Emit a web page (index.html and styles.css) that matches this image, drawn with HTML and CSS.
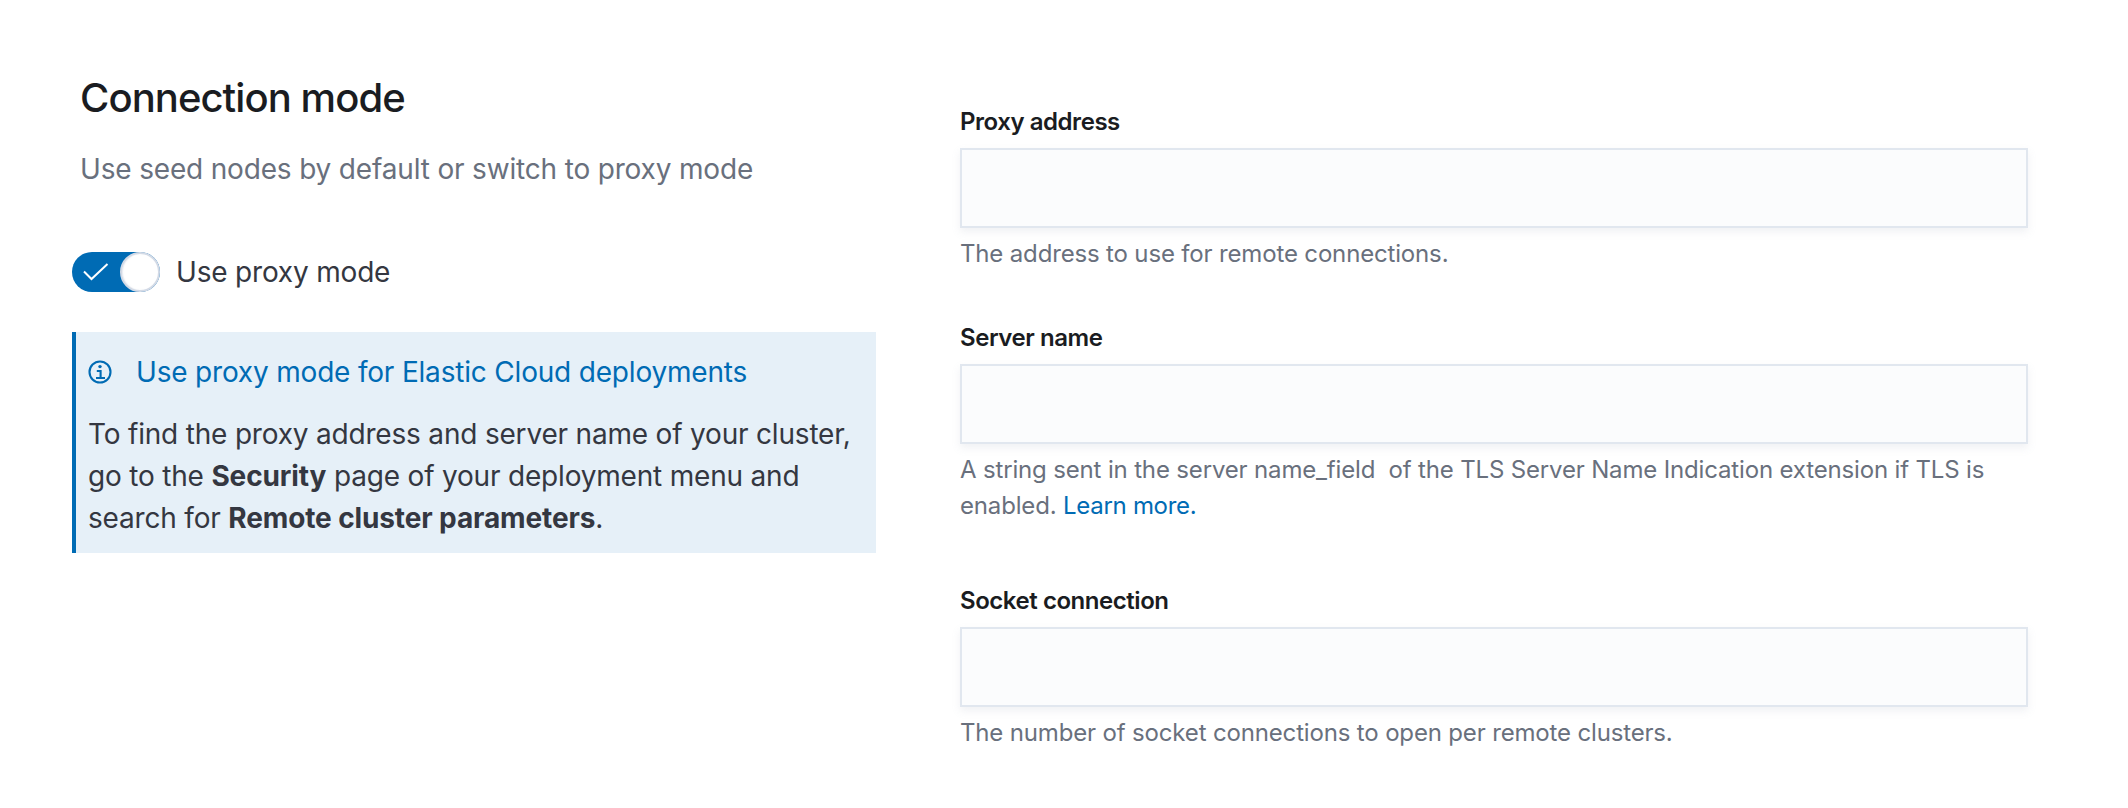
FILE: index.html
```html
<!DOCTYPE html>
<html lang="en">
<head>
<meta charset="utf-8">
<title>Connection mode</title>
<link rel="stylesheet" href="styles.css">
</head>
<body>
<main class="page">
  <section class="left">
    <h2 class="title">Connection mode</h2>
    <p class="subtitle">Use seed nodes by default or switch to proxy mode</p>
    <div class="switch-row">
      <span class="switch">
        <svg class="check" viewBox="0 0 26 20" width="26" height="20" aria-hidden="true"><path d="M1 9.5 L8.5 17 L24.5 2" fill="none" stroke="#fff" stroke-width="2"/></svg>
        <span class="thumb"></span>
      </span>
      <span class="switch-label">Use proxy mode</span>
    </div>
    <div class="callout">
      <div class="callout-title">
        <svg class="info" viewBox="0 0 24 24" width="24" height="24" aria-hidden="true">
          <circle cx="12" cy="12" r="10.5" fill="none" stroke="#006bb4" stroke-width="2.1"/>
          <circle cx="12" cy="6.6" r="1.7" fill="#006bb4"/>
          <path d="M8.8 11 H12.6 V17.6 M8 18 H17" fill="none" stroke="#006bb4" stroke-width="2.1"/>
        </svg>
        <span>Use proxy mode for Elastic Cloud deployments</span>
      </div>
      <p class="callout-body">To find the proxy address and server name of your cluster, go to the <strong>Security</strong> page of your deployment menu and search for <strong>Remote cluster parameters</strong>.</p>
    </div>
  </section>
  <section class="right">
    <div class="field">
      <label class="label">Proxy address</label>
      <div class="input"></div>
      <p class="help">The address to use for remote connections.</p>
    </div>
    <div class="field field-wrapped">
      <label class="label">Server name</label>
      <div class="input"></div>
      <p class="help">A string sent in the server name_field&nbsp; of the TLS Server Name Indication extension if TLS is enabled. <a class="link">Learn more.</a></p>
    </div>
    <div class="field">
      <label class="label">Socket connection</label>
      <div class="input"></div>
      <p class="help">The number of socket connections to open per remote clusters.</p>
    </div>
  </section>
</main>
</body>
</html>
```
FILE: styles.css
```css
* { box-sizing: border-box; }
html, body { margin: 0; padding: 0; background: #fff; }
body { font-family: Inter, "Liberation Sans", sans-serif; color: #343741; width: 2128px; height: 808px; overflow: hidden; }
.page { display: flex; padding: 0 100px 0 72px; gap: 84px; }
.left { width: 804px; flex: none; padding-top: 72px; }
.title { margin: 0 0 0 8px; font-size: 40px; line-height: 52px; font-weight: 450; color: #1a1c21; letter-spacing: -0.93px; }
.subtitle { margin: 25px 0 0 8px; font-size: 28px; line-height: 40px; color: #69707d; letter-spacing: -0.17px; }
.switch-row { display: flex; align-items: center; gap: 16px; margin-top: 63px; }
.switch { position: relative; display: block; width: 88px; height: 40px; border-radius: 20px; background: #006bb4; flex: none; }
.check { position: absolute; left: 11px; top: 10px; }
.thumb { position: absolute; right: 0; top: 0; width: 40px; height: 40px; border-radius: 50%; background: #fff; border: 2px solid #d3dae6; box-shadow: inset 1px 0 1px rgba(211,218,230,.5); }
.switch-label { font-size: 28px; line-height: 40px; letter-spacing: -0.19px; }
.callout { margin-top: 40px; background: #e6f0f8; border-left: 4px solid #006bb4; padding: 20px 8px 14px 12px; }
.callout-title { display: flex; align-items: center; gap: 24px; font-size: 28px; line-height: 40px; color: #006bb4; letter-spacing: -0.19px; }
.info { flex: none; }
.callout-body { margin: 21px 0 0; font-size: 28px; line-height: 42px; letter-spacing: -0.19px; }
.callout-body strong { font-weight: 700; letter-spacing: -0.12px; }
.right { width: 1068px; flex: none; padding-top: 106px; }
.field { margin-bottom: 50px; }
.field-wrapped { margin-bottom: 61px; }
.label { display: block; font-size: 24px; line-height: 32px; font-weight: 600; color: #1a1c21; letter-spacing: -0.45px; }
.input { height: 80px; margin-top: 10px; background: #fbfcfd; border: 2px solid #e1e7ef; box-shadow: 0 4px 8px rgba(152,162,179,.15); }
.help { margin: 8px 0 0; font-size: 24px; line-height: 36px; color: #69707d; letter-spacing: -0.16px; }
.link { color: #006bb4; letter-spacing: -0.3px; }
```
